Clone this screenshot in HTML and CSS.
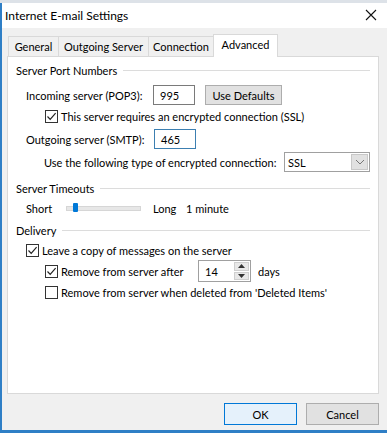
FILE: index.html
```html
<!DOCTYPE html>
<html lang="en">
<head>
    <meta charset="UTF-8">
    <title>Internet E-mail Settings</title>
    <link rel="stylesheet" href="styles.css">
</head>
<body>
    <div class="window">
        <div class="titlebar">
            <span class="title">Internet E-mail Settings</span>
            <svg class="close" width="12" height="12" viewBox="0 0 12 12">
                <path d="M1 1 L11 11 M11 1 L1 11" stroke="#111" stroke-width="1.1" fill="none"/>
            </svg>
        </div>

        <div class="dialog">
            <div class="tabs">
                <div class="tab tab-general">General</div>
                <div class="tab tab-outgoing">Outgoing Server</div>
                <div class="tab tab-connection">Connection</div>
                <div class="tab tab-advanced active">Advanced</div>
            </div>

            <div class="panel">
                <div class="group-head head-ports"><span>Server Port Numbers</span></div>

                <div class="row row-incoming">
                    <span class="field-label">Incoming server (POP3):</span>
                    <div class="textbox">995</div>
                    <button class="btn btn-defaults" type="button">Use Defaults</button>
                </div>

                <div class="row row-ssl indent2">
                    <span class="check checked"><svg width="11" height="11" viewBox="0 0 11 11"><path d="M1.5 5.5 L4.2 8.3 L9.6 2.2" stroke="#222" stroke-width="1.2" fill="none"/></svg></span>
                    <span>This server requires an encrypted connection (SSL)</span>
                </div>

                <div class="row row-smtp">
                    <span class="field-label">Outgoing server (SMTP):</span>
                    <div class="textbox focused">465</div>
                </div>

                <div class="row row-enc">
                    <span class="enc-label">Use the following type of encrypted connection:</span>
                    <div class="select">
                        <span>SSL</span>
                        <span class="select-btn"><svg width="10" height="6" viewBox="0 0 10 6"><path d="M1 1 L5 5 L9 1" stroke="#777" stroke-width="1" fill="none"/></svg></span>
                    </div>
                </div>

                <div class="group-head head-timeouts"><span>Server Timeouts</span></div>

                <div class="row row-short">
                    <span class="short-label">Short</span>
                    <div class="slider"><div class="slider-thumb"></div></div>
                    <span class="long-label">Long</span>
                    <span>1 minute</span>
                </div>

                <div class="group-head head-delivery"><span>Delivery</span></div>

                <div class="row row-leave">
                    <span class="check checked"><svg width="11" height="11" viewBox="0 0 11 11"><path d="M1.5 5.5 L4.2 8.3 L9.6 2.2" stroke="#222" stroke-width="1.2" fill="none"/></svg></span>
                    <span>Leave a copy of messages on the server</span>
                </div>

                <div class="row row-after indent2">
                    <span class="check checked"><svg width="11" height="11" viewBox="0 0 11 11"><path d="M1.5 5.5 L4.2 8.3 L9.6 2.2" stroke="#222" stroke-width="1.2" fill="none"/></svg></span>
                    <span class="after-label">Remove from server after</span>
                    <div class="spinbox">
                        <span class="spin-value">14</span>
                        <span class="spin-arrows">
                            <span class="spin-up"><svg width="7" height="4" viewBox="0 0 7 4"><path d="M0 4 L3.5 0 L7 4 Z" fill="#333"/></svg></span>
                            <span class="spin-down"><svg width="7" height="4" viewBox="0 0 7 4"><path d="M0 0 L3.5 4 L7 0 Z" fill="#333"/></svg></span>
                        </span>
                    </div>
                    <span class="days-label">days</span>
                </div>

                <div class="row row-deleted indent2">
                    <span class="check"></span>
                    <span>Remove from server when deleted from 'Deleted Items'</span>
                </div>
            </div>

            <div class="button-bar">
                <button class="btn btn-ok" type="button">OK</button>
                <button class="btn btn-cancel" type="button">Cancel</button>
            </div>
        </div>
    </div>
</body>
</html>
```

FILE: styles.css
```css
body {
    margin: 0;
    font-family: Lato, "Noto Sans", sans-serif;
    font-size: 11px;
    color: #000;
    background-color: #dde2e8;
    white-space: nowrap;
}

.window {
    margin-top: 3px;
    height: 430px;
    box-sizing: border-box;
    border-left: 2px solid #2f7fc6;
    border-bottom: 3px solid #2f7fc6;
    background-color: #f0f0f0;
    display: flex;
    flex-direction: column;
}

.titlebar {
    height: 25px;
    background-color: #fff;
    display: flex;
    align-items: center;
    justify-content: space-between;
    padding: 0 10px 1px 3px;
    box-sizing: border-box;
}

.title {
    font-size: 12px;
}

.dialog {
    padding: 6px 8px 0 5px;
    display: flex;
    flex-direction: column;
}

.tabs {
    display: flex;
    height: 22px;
    align-items: flex-end;
    padding-left: 1px;
    position: relative;
    z-index: 1;
}

.tab {
    height: 20px;
    box-sizing: border-box;
    border: 1px solid #d9d9d9;
    border-bottom: none;
    border-right: none;
    display: flex;
    align-items: center;
    justify-content: center;
    background-color: #f0f0f0;
    flex-shrink: 0;
}

.tab-general { width: 50px; }
.tab-outgoing { width: 90px; }
.tab-connection { width: 65px; }

.tab-advanced {
    width: 65px;
    height: 23px;
    margin-bottom: -1px;
    background-color: #fff;
    border-right: 1px solid #d9d9d9;
    padding-bottom: 3px;
}

.panel {
    height: 338px;
    box-sizing: border-box;
    background-color: #fff;
    border: 1px solid #d9d9d9;
    padding: 5px 8px 0 8px;
}

.group-head {
    height: 16px;
    display: flex;
    align-items: center;
}

.group-head::after {
    content: "";
    flex: 1;
    height: 1px;
    background-color: #dcdcdc;
    margin-left: 6px;
}

.row {
    display: flex;
    align-items: center;
    height: 16px;
    padding-left: 10px;
}

.row > * {
    flex-shrink: 0;
}

.indent2 {
    padding-left: 29px;
}

.row-incoming { height: 22px; margin-top: 6px; }
.row-ssl { margin-top: 2px; }
.row-smtp { height: 20px; margin-top: 5px; }
.row-enc { height: 20px; margin-top: 3px; padding-left: 28px; }
.head-timeouts { margin-top: 8px; }
.row-short { margin-top: 4px; }
.head-delivery { margin-top: 6px; }
.row-leave { margin-top: 4px; }
.row-after { height: 22px; margin-top: 2px; }
.row-deleted { margin-top: 2px; }

.field-label {
    width: 127px;
}

.textbox {
    width: 42px;
    height: 20px;
    box-sizing: border-box;
    border: 1px solid #7a7a7a;
    background-color: #fff;
    padding-left: 6px;
    display: flex;
    align-items: center;
}

.textbox.focused {
    border-color: #3c7fb1;
    margin-left: 1px;
}

.btn {
    font-family: inherit;
    font-size: 11px;
    color: #000;
    background-color: #e1e1e1;
    border: 1px solid #adadad;
    padding: 0;
    box-sizing: border-box;
}

.btn-defaults {
    width: 77px;
    height: 20px;
    margin-left: 10px;
}

.check {
    width: 13px;
    height: 13px;
    box-sizing: border-box;
    border: 1px solid #333;
    background-color: #fff;
    margin-right: 3px;
    display: flex;
    align-items: center;
    justify-content: center;
}

.enc-label {
    width: 240px;
}

.select {
    width: 86px;
    height: 20px;
    box-sizing: border-box;
    border: 1px solid #a0a0a0;
    background-color: #fff;
    display: flex;
    align-items: center;
    justify-content: space-between;
    padding-left: 3px;
}

.select-btn {
    width: 17px;
    height: 16px;
    margin-right: 1px;
    background-color: #e1e1e1;
    border: 1px solid #c8c8c8;
    box-sizing: border-box;
    display: flex;
    align-items: center;
    justify-content: center;
}

.short-label {
    width: 40px;
}

.slider {
    width: 73px;
    height: 3px;
    background-color: #e7e7e7;
    border: 1px solid #d6d6d6;
    position: relative;
    margin-right: 12px;
}

.slider-thumb {
    position: absolute;
    left: 6px;
    top: -4px;
    width: 5px;
    height: 9px;
    border-radius: 1px;
    background-color: #0078d7;
}

.long-label {
    width: 33px;
}

.after-label {
    width: 137px;
}

.spinbox {
    width: 53px;
    height: 22px;
    box-sizing: border-box;
    border: 1px solid #a0a0a0;
    background-color: #fff;
    display: flex;
    align-items: center;
    justify-content: space-between;
    padding-left: 6px;
}

.spin-arrows {
    width: 15px;
    height: 18px;
    margin-right: 1px;
    display: flex;
    flex-direction: column;
    gap: 1px;
}

.spin-up,
.spin-down {
    flex: 1;
    background-color: #e8e8e8;
    border: 1px solid #cfcfcf;
    display: flex;
    align-items: center;
    justify-content: center;
}

.days-label {
    margin-left: 7px;
}

.button-bar {
    display: flex;
    justify-content: flex-end;
    gap: 9px;
    margin-top: 9px;
}

.btn-ok,
.btn-cancel {
    width: 73px;
    height: 22px;
}

.btn-ok {
    background-color: #e5f1fb;
    border-color: #0078d7;
}
```
